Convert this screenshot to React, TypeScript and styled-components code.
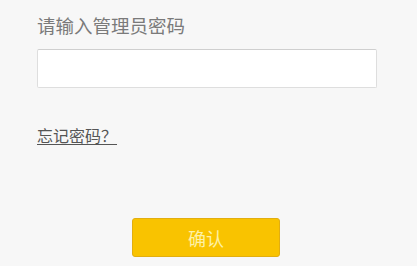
import React from "react";
import styled, { createGlobalStyle } from "styled-components";

const Global = createGlobalStyle`
  html, body { margin: 0; padding: 0; background: #f7f7f7; }
  body { font-family: "Noto Sans CJK SC", "Liberation Sans", sans-serif; }
`;

const Page = styled.div`
  width: 417px;
  height: 266px;
  box-sizing: border-box;
  padding: 13px 0 0 37px;
  display: flex;
  flex-direction: column;
`;

const Label = styled.div`
  font-size: 18.5px;
  line-height: 24px;
  color: #7a7a7a;
  height: 24px;
`;

const Input = styled.input`
  margin-top: 12px;
  width: 340px;
  height: 39px;
  box-sizing: border-box;
  background: #fff;
  border: 1px solid #dedede;
  border-top-color: #cfcfcf;
  border-radius: 2px;
  outline: none;
  padding: 0 8px;
  font-size: 16px;
`;

const Forgot = styled.a`
  margin-top: 36px;
  align-self: flex-start;
  font-size: 16px;
  line-height: 22px;
  color: #555;
  text-decoration: underline;
  text-underline-offset: 2px;
  cursor: pointer;
`;

const Confirm = styled.button`
  margin-top: 72px;
  margin-left: 95px;
  width: 148px;
  height: 39px;
  box-sizing: border-box;
  background: #f9c300;
  border: 1px solid #e2ae10;
  border-radius: 3px;
  color: #fdf1a6;
  font-family: "Noto Sans CJK SC", "Liberation Sans", sans-serif;
  font-size: 18px;
  padding: 0;
  cursor: pointer;
`;

export default function App() {
  return (
    <>
      <Global />
      <Page>
        <Label>请输入管理员密码</Label>
        <Input type="password" />
        <Forgot>忘记密码？</Forgot>
        <Confirm>确认</Confirm>
      </Page>
    </>
  );
}
